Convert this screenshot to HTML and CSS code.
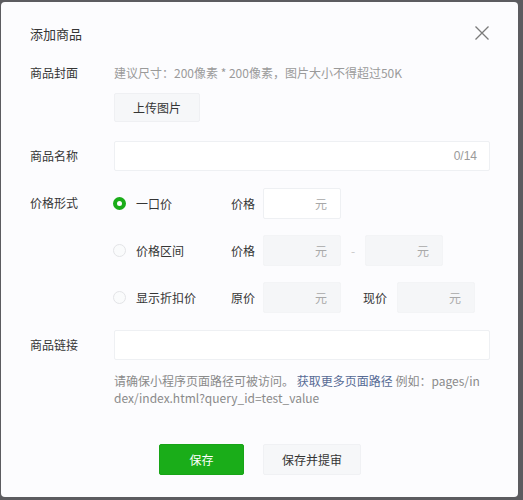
FILE: index.html
```html
<!DOCTYPE html>
<html lang="zh-CN">
<head>
<meta charset="utf-8">
<title>添加商品</title>
<link rel="stylesheet" href="styles.css">
</head>
<body>
<div class="dialog">
  <div class="header">
    <div class="title">添加商品</div>
    <svg class="close" width="16" height="16" viewBox="0 0 16 16"><path d="M1.5 1.5 L14.5 14.5 M14.5 1.5 L1.5 14.5" stroke="#7a7a7a" stroke-width="1.3" fill="none"/></svg>
  </div>

  <div class="row cover">
    <div class="label">商品封面</div>
    <div class="content">
      <div class="hint">建议尺寸：200像素 * 200像素，图片大小不得超过50K</div>
      <div class="upload">上传图片</div>
    </div>
  </div>

  <div class="row name">
    <div class="label">商品名称</div>
    <div class="content">
      <div class="input wide"><span class="count">0/14</span></div>
    </div>
  </div>

  <div class="row price">
    <div class="label">价格形式</div>
    <div class="content options">
      <div class="option">
        <div class="radio-group"><span class="radio checked"></span><span>一口价</span></div>
        <span class="plabel">价格</span>
        <div class="input small"><span class="unit">元</span></div>
      </div>
      <div class="option">
        <div class="radio-group"><span class="radio"></span><span>价格区间</span></div>
        <span class="plabel">价格</span>
        <div class="input small disabled"><span class="unit">元</span></div>
        <span class="dash">-</span>
        <div class="input small disabled"><span class="unit">元</span></div>
      </div>
      <div class="option">
        <div class="radio-group"><span class="radio"></span><span>显示折扣价</span></div>
        <span class="plabel">原价</span>
        <div class="input small disabled"><span class="unit">元</span></div>
        <span class="plabel now">现价</span>
        <div class="input small disabled"><span class="unit">元</span></div>
      </div>
    </div>
  </div>

  <div class="row link">
    <div class="label">商品链接</div>
    <div class="content">
      <div class="input wide"></div>
      <p class="help">请确保小程序页面路径可被访问。 <a class="more">获取更多页面路径</a> 例如：pages/index/index.html?query_id=test_value</p>
    </div>
  </div>

  <div class="actions">
    <button class="btn primary">保存</button>
    <button class="btn default">保存并提审</button>
  </div>
</div>
</body>
</html>
```

FILE: styles.css
```css
html, body {
  margin: 0;
  padding: 0;
  background: #5c5c60;
}
body {
  width: 523px;
  height: 500px;
  overflow: hidden;
  font-family: "Noto Sans CJK SC", "Noto Sans", sans-serif;
  font-size: 12px;
  color: #353535;
}
.dialog {
  box-sizing: border-box;
  margin: 2px 5px 0 1px;
  width: 517px;
  height: 495px;
  background: #fcfcfe;
  border-radius: 4px;
  padding: 22px 28px 0 29px;
}
.header {
  display: flex;
  justify-content: space-between;
  align-items: center;
  height: 20px;
}
.title {
  font-size: 13px;
  line-height: 20px;
  color: #353535;
}
.close {
  display: block;
  margin-top: -2px;
}
.row {
  display: grid;
  grid-template-columns: 84px 376px;
}
.label {
  line-height: 20px;
  color: #353535;
}
.cover {
  margin-top: 19px;
}
.hint {
  line-height: 20px;
  color: #9a9a9a;
}
.upload {
  box-sizing: border-box;
  margin-top: 10px;
  width: 86px;
  height: 29px;
  line-height: 27px;
  text-align: center;
  background: #f6f7f9;
  border: 1px solid #eff0f3;
  border-radius: 2px;
  color: #353535;
}
.name {
  margin-top: 19px;
  align-items: center;
}
.input {
  box-sizing: border-box;
  height: 30px;
  border: 1px solid #eef0f3;
  border-radius: 2px;
  background: #fff;
  display: flex;
  align-items: center;
  justify-content: flex-end;
  color: #a5a5a5;
}
.input.wide {
  width: 376px;
  padding-right: 12px;
}
.count {
  font-family: "Liberation Sans", sans-serif;
  font-size: 12px;
  color: #9a9a9a;
}
.price {
  margin-top: 17px;
  align-items: start;
}
.price .label {
  margin-top: 5px;
}
.options {
  display: flex;
  flex-direction: column;
  gap: 16px;
}
.option {
  display: flex;
  align-items: center;
  height: 31px;
}
.radio-group {
  width: 117px;
  display: flex;
  align-items: center;
  color: #353535;
}
.radio {
  box-sizing: border-box;
  width: 13px;
  height: 13px;
  margin-left: -1px;
  margin-right: 10px;
  border-radius: 50%;
  border: 1px solid #e3e4e7;
  background: #fafbfc;
}
.radio.checked {
  border: 4px solid #1aad19;
  background: #fff;
}
.plabel {
  width: 32px;
  color: #353535;
}
.plabel.now {
  width: 34px;
  margin-left: 22px;
}
.input.small {
  width: 78px;
  height: 31px;
  padding-right: 13px;
}
.input.disabled {
  background: #f5f6f8;
  border-color: #f3f4f6;
}
.unit {
  color: #a8a8a8;
}
.dash {
  width: 24px;
  text-align: center;
  color: #c8c8c8;
}
.link {
  margin-top: 17px;
  align-items: start;
}
.link .label {
  margin-top: 5px;
}
.help {
  margin: 12px 0 0;
  width: 372px;
  line-height: 17px;
  color: #8a8a8a;
  word-break: break-all;
}
.more {
  color: #576b95;
}
.actions {
  display: flex;
  justify-content: center;
  gap: 19px;
  margin-top: 38px;
}
.btn {
  box-sizing: border-box;
  height: 31px;
  border-radius: 2px;
  font-family: "Noto Sans CJK SC", sans-serif;
  font-size: 12px;
  cursor: pointer;
}
.btn.primary {
  width: 85px;
  background: #1aad19;
  border: 1px solid #18a417;
  color: #fff;
}
.btn.default {
  width: 98px;
  background: #f6f7f9;
  border: 1px solid #f0f1f4;
  color: #353535;
}
```
